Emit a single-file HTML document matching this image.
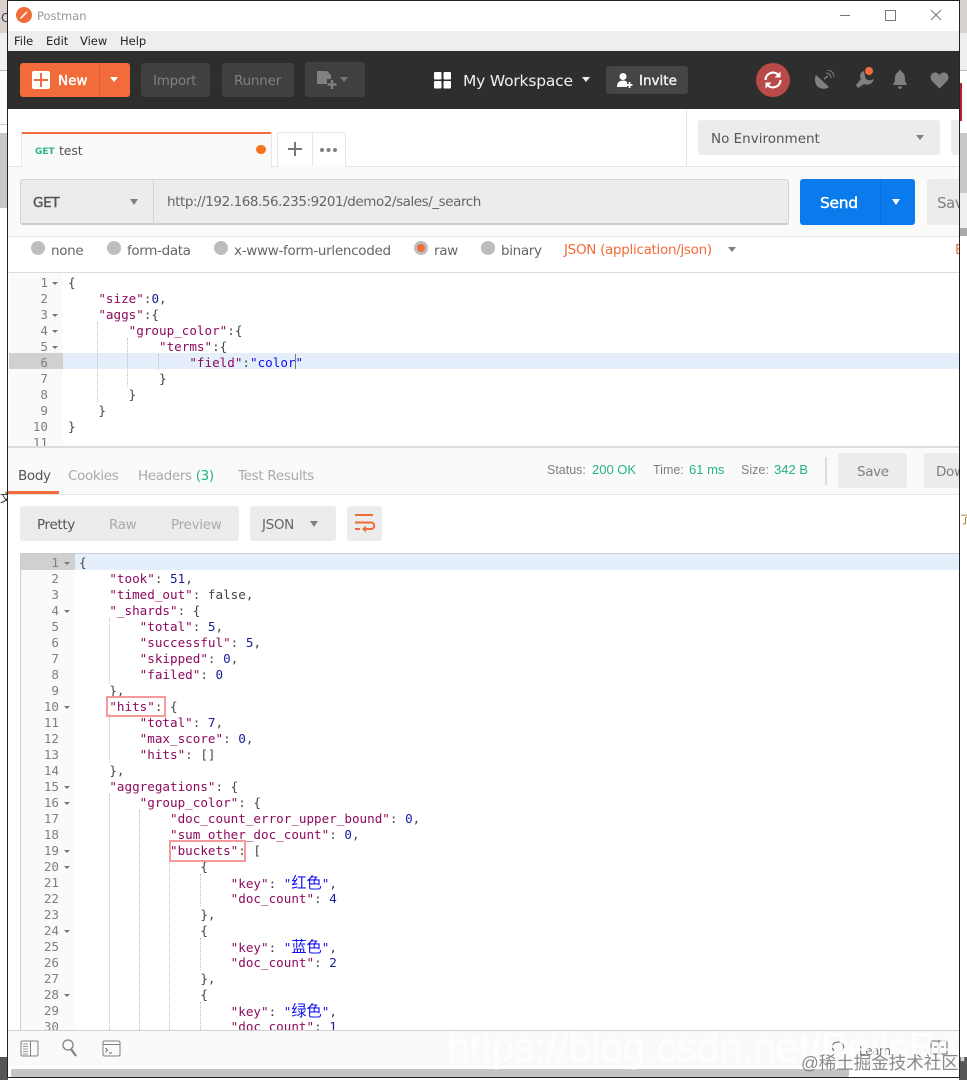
<!DOCTYPE html>
<html><head><meta charset="utf-8"><title>Postman</title>
<style>
html,body{margin:0;padding:0;background:#fff}
body{width:967px;height:1080px;position:relative;overflow:hidden;font-family:"DejaVu Sans","Liberation Sans","Noto Sans CJK SC",sans-serif;font-size:13px;color:#666}
.a{position:absolute}
.t{position:absolute;white-space:pre;line-height:16px;margin-top:1px}
.b{font-weight:normal;-webkit-text-stroke:.4px currentColor}
.c{position:absolute;white-space:pre;font-family:"DejaVu Sans Mono","Noto Sans CJK SC",monospace;font-size:12.6px;line-height:16px;color:#444;height:16px;margin-top:1px}
.n{position:absolute;font-family:"DejaVu Sans Mono",monospace;font-size:12.6px;line-height:16px;text-align:right;color:#808080;height:16px;margin-top:1px}
.k{color:#8c0a5f}.d{color:#1b1b9e}.s{color:#1010f0}
.z{font-size:15.2px;line-height:16px}
.g{position:absolute;width:0;border-left:1px dotted #bbb}
.f{position:absolute;width:0;height:0;border-left:3px solid transparent;border-right:3px solid transparent;border-top:3px solid #777;margin-top:1px}
.car{position:absolute;width:0;height:0;border-left:5px solid transparent;border-right:5px solid transparent;border-top:6px solid #808080}
.rad{position:absolute;width:14px;height:14px;border-radius:50%;background:#bdbdbd}
.box{position:absolute;background:#ececec;border-radius:3px}
</style></head><body>

<!-- desktop strips outside window -->
<div class="a" style="left:0;top:0;width:8px;height:33px;background:#d8d2cf"></div>
<div class="a" style="left:0;top:33px;width:8px;height:37px;background:#f1f1f1"></div>
<div class="a" style="left:0;top:70px;width:8px;height:1px;background:#bbb"></div>
<div class="a" style="left:0;top:79px;width:8px;height:45px;background:#fafafa"></div>
<div class="a" style="left:0;top:124px;width:8px;height:1px;background:#ccc"></div>
<div class="a" style="left:0;top:133px;width:8px;height:75px;background:#c8c8c8"></div>
<div class="a" style="left:0;top:208px;width:8px;height:872px;background:#fff"></div>
<div class="t" style="left:1px;top:9px;color:#444;font-size:12px">C</div>
<div class="a" style="left:959px;top:0;width:8px;height:33px;background:#d8d2cf"></div>
<div class="a" style="left:960px;top:33px;width:7px;height:37px;background:#eee"></div>
<div class="a" style="left:960px;top:70px;width:7px;height:1px;background:#bbb"></div>
<div class="a" style="left:960px;top:83px;width:2px;height:38px;background:#b02030"></div>
<div class="a" style="left:960px;top:133px;width:7px;height:60px;background:#c9c9c9"></div>
<div class="a" style="left:960px;top:193px;width:7px;height:35px;background:#eee"></div>
<div class="a" style="left:960px;top:228px;width:7px;height:8px;background:#aaa"></div>
<div class="a" style="left:0;top:1057px;width:8px;height:23px;background:#555"></div>
<div class="a" style="left:959px;top:1057px;width:8px;height:23px;background:#555"></div>
<div class="t" style="left:0;top:489px;font-size:12px;color:#333">文</div>
<div class="t" style="left:960px;top:511px;font-size:11px;color:#a60">了</div>

<!-- window -->
<div class="a" id="w" style="left:7px;top:0;width:953px;height:1078px;box-sizing:border-box;border:1px solid #222;background:#fff;overflow:hidden">
</div>
<div class="a" style="left:8px;top:1px;width:951px;height:1076px;overflow:hidden;background:#fff">
<div style="position:absolute;left:-8px;top:-1px;width:967px;height:1080px">

<!-- title bar -->
<div class="a" style="left:16px;top:7px;width:16px;height:16px;border-radius:50%;background:#f26b3a"></div>
<svg class="a" style="left:16px;top:7px" width="16" height="16"><path d="M4.5 11.5L11 4.8" stroke="#fff" stroke-width="1.6" fill="none"/></svg>
<div class="t" style="left:37px;top:7px;color:#999;font-size:11.5px">Postman</div>
<div class="a" style="left:840px;top:15px;width:10px;height:1px;background:#777"></div>
<div class="a" style="left:885px;top:10px;width:9px;height:9px;border:1px solid #777"></div>
<svg class="a" style="left:930px;top:9px" width="12" height="12"><path d="M1 1L11 11M11 1L1 11" stroke="#777" stroke-width="1" fill="none"/></svg>

<!-- menu -->
<div class="a" style="left:8px;top:31px;width:951px;height:20px;background:#eee"></div>
<div class="t" style="left:14px;top:32px;color:#222;font-size:11.5px">File</div>
<div class="t" style="left:46px;top:32px;color:#222;font-size:11.5px">Edit</div>
<div class="t" style="left:80px;top:32px;color:#222;font-size:11.5px">View</div>
<div class="t" style="left:120px;top:32px;color:#222;font-size:11.5px">Help</div>

<!-- header -->
<div class="a" style="left:8px;top:51px;width:951px;height:58px;background:#2e2e2e"></div>
<div class="a" style="left:20px;top:63px;width:110px;height:34px;background:#f26b3a;border-radius:3px"></div>
<div class="a" style="left:99px;top:63px;width:1px;height:34px;background:#d85f33"></div>
<div class="a" style="left:32px;top:71px;width:18px;height:18px;background:#fff;border-radius:2px"></div>
<div class="a" style="left:40px;top:73px;width:2px;height:14px;background:#f26b3a"></div>
<div class="a" style="left:34px;top:79px;width:14px;height:2px;background:#f26b3a"></div>
<div class="t b" style="left:58px;top:72px;color:#fff;font-size:13.5px">New</div>
<div class="car" style="left:110px;top:77px;border-top-color:#fff;border-left-width:4.5px;border-right-width:4.5px;border-top-width:5px"></div>
<div class="box" style="left:141px;top:63px;width:69px;height:34px;background:#404040"></div>
<div class="t" style="left:153px;top:72px;color:#808080;font-size:13.5px;letter-spacing:-.25px">Import</div>
<div class="box" style="left:222px;top:63px;width:72px;height:34px;background:#404040"></div>
<div class="t" style="left:234px;top:72px;color:#808080;font-size:13.5px;letter-spacing:-.2px">Runner</div>
<div class="box" style="left:305px;top:62px;width:60px;height:35px;background:#404040"></div>
<svg class="a" style="left:316px;top:69px" width="30" height="21"><path d="M1 2h10l4 4v4h-4v5H1z" fill="#808080"/><path d="M16 11v9M11.500 15.500h9" stroke="#808080" stroke-width="2.400"/></svg>
<div class="car" style="left:340px;top:77px;border-left-width:4px;border-right-width:4px;border-top-width:5px;border-top-color:#777"></div>
<svg class="a" style="left:434px;top:72px" width="18" height="17"><rect x="0" y="0" width="7.500" height="7.500" rx="1" fill="#fff"/><rect x="9.500" y="0" width="7.500" height="7.500" rx="1" fill="#fff"/><rect x="0" y="9" width="7.500" height="7.500" rx="1" fill="#fff"/><rect x="9.500" y="9" width="7.500" height="7.500" rx="1" fill="#fff"/></svg>
<div class="t" style="left:463px;top:72px;color:#f0f0f0;font-size:15.500px;letter-spacing:-.2px">My Workspace</div>
<div class="car" style="left:582px;top:77px;border-top-color:#eee;border-left-width:4.500px;border-right-width:4.500px;border-top-width:5px"></div>
<div class="box" style="left:606px;top:66px;width:82px;height:28px;background:#454545"></div>
<svg class="a" style="left:616px;top:72px" width="18" height="17"><circle cx="7" cy="4.500" r="3.500" fill="#fff"/><path d="M1 15c0-5 3-6.500 6-6.500 2 0 3 .5 4 1.500v5z" fill="#fff"/><path d="M13.500 10v6M10.500 13h6" stroke="#fff" stroke-width="1.800"/></svg>
<div class="t b" style="left:639px;top:72px;color:#f0f0f0;font-size:13.500px">Invite</div>
<div class="a" style="left:756px;top:63px;width:34px;height:34px;border-radius:50%;background:#b94a48"></div>
<svg class="a" style="left:756px;top:63px" width="34" height="34"><path d="M9.500 17a7.500 7.500 0 0 1 13-5M24.500 17a7.500 7.500 0 0 1-13 5" stroke="#fff" stroke-width="2.200" fill="none"/><path d="M24.500 8.500v6h-6zM9.500 25.500v-6h6z" fill="#fff"/></svg>
<svg class="a" style="left:814px;top:70px" width="21" height="20"><path d="M2 5l13 12c-4 3-9 2-12-1-2-3-3-7-1-11z" fill="#808080"/><path d="M10 9l4-3" stroke="#808080" stroke-width="1.500"/><path d="M12 3c3 0 5 2 5 5M13 0c4 0 7 3 7 7" stroke="#808080" stroke-width="1" fill="none"/></svg>
<svg class="a" style="left:856px;top:71px" width="20" height="18"><path d="M8 0C4 1 3 5 5 8L0 14l2 3 6-4c5 2 9-1 10-5l-3 1c-3 1-6-1-6-4z" fill="#808080"/></svg>
<div class="a" style="left:865px;top:67px;width:8px;height:8px;border-radius:50%;background:#f26b3a"></div>
<svg class="a" style="left:892px;top:70px" width="16" height="20"><path d="M8 0c1 0 1.500 1 1.500 2 3 1 3.500 4 3.500 7s1 4 2 6H1c1-2 2-3 2-6s.5-6 3.500-7C6.500 1 7 0 8 0zM6 16.500h4c0 1.500-1 2.500-2 2.500s-2-1-2-2.500z" fill="#808080"/></svg>
<svg class="a" style="left:930px;top:72px" width="19" height="17"><path d="M9.500 16.500L2 9C-1 5.500 1 .5 5 .5c2 0 3.500 1 4.500 2.500C10.500 1.500 12 .5 14 .5c4 0 6 5 3 8.500z" fill="#808080"/></svg>

<!-- tabs row -->
<div class="a" style="left:8px;top:166px;width:951px;height:1px;background:#e5e5e5"></div>
<div class="a" style="left:21px;top:132px;width:251px;height:35px;background:#fafafa;box-sizing:border-box;border:1px solid #e6e6e6;border-bottom:none;border-top:2px solid #f26b3a;border-radius:2px 2px 0 0"></div>
<div class="t" style="left:35px;top:143px;color:#26b47f;font-size:9px;font-weight:bold">GET</div>
<div class="t" style="left:59px;top:142px;color:#555;font-size:12.500px;letter-spacing:-.1px">test</div>
<div class="a" style="left:256px;top:145px;width:10px;height:9px;border-radius:5px;background:#f4741f"></div>
<div class="a" style="left:277px;top:132px;width:69px;height:35px;box-sizing:border-box;border:1px solid #e6e6e6;border-bottom:none;background:#fff;border-radius:2px 2px 0 0"></div>
<div class="a" style="left:312px;top:133px;width:1px;height:33px;background:#e6e6e6"></div>
<div class="a" style="left:288px;top:148px;width:14px;height:2px;background:#777"></div>
<div class="a" style="left:294px;top:142px;width:2px;height:14px;background:#777"></div>
<div class="a" style="left:320px;top:148px;width:4px;height:4px;border-radius:50%;background:#808080;box-shadow:6.500px 0 0 #808080,13px 0 0 #808080"></div>
<div class="a" style="left:686px;top:109px;width:1px;height:57px;background:#e5e5e5"></div>
<div class="box" style="left:698px;top:120px;width:242px;height:35px"></div>
<div class="t" style="left:711px;top:130px;color:#555;font-size:13.500px;letter-spacing:0">No Environment</div>
<div class="car" style="left:916px;top:135px;border-left-width:4.500px;border-right-width:4.500px;border-top-width:5px"></div>
<div class="box" style="left:951px;top:120px;width:30px;height:35px"></div>

<!-- request bar -->
<div class="a" style="left:8px;top:167px;width:951px;height:69px;background:#fafafa"></div>
<div class="a" style="left:8px;top:236px;width:951px;height:1px;background:#e6e6e6"></div>
<div class="a" style="left:20px;top:179px;width:769px;height:46px;box-sizing:border-box;background:#ececec;border:1px solid #d4d4d4;border-bottom:2px solid #ccc;border-radius:3px"></div>
<div class="a" style="left:153px;top:180px;width:1px;height:44px;background:#d4d4d4"></div>
<div class="t b" style="left:33px;top:194px;color:#555;font-size:13.500px;letter-spacing:-.3px">GET</div>
<div class="car" style="left:130px;top:199px;border-left-width:4.500px;border-right-width:4.500px;border-top-width:6px"></div>
<div class="t" style="left:167px;top:193px;color:#666;font-size:13.500px;letter-spacing:-.44px">http://192.168.56.235:9201/demo2/sales/_search</div>
<div class="box" style="left:800px;top:179px;width:115px;height:46px;background:#097bed"></div>
<div class="a" style="left:880px;top:179px;width:1px;height:46px;background:#0a6fd4"></div>
<div class="t b" style="left:820px;top:194px;color:#fff;font-size:15.500px;letter-spacing:-.3px">Send</div>
<div class="car" style="left:892px;top:199px;border-top-color:#fff;border-left-width:4.500px;border-right-width:4.500px;border-top-width:6px"></div>
<div class="box" style="left:927px;top:179px;width:60px;height:46px"></div>
<div class="t" style="left:937px;top:194px;color:#808080;font-size:15px;letter-spacing:-.5px">Save</div>

<!-- body radios -->
<div class="rad" style="left:31px;top:241px"></div><div class="t" style="left:51px;top:242px;font-size:13.500px;letter-spacing:-.35px">none</div>
<div class="rad" style="left:107px;top:241px"></div><div class="t" style="left:127px;top:242px;font-size:13.500px;letter-spacing:-.35px">form-data</div>
<div class="rad" style="left:214px;top:241px"></div><div class="t" style="left:234px;top:242px;font-size:13.500px;letter-spacing:-.3px">x-www-form-urlencoded</div>
<div class="rad" style="left:414px;top:241px"></div><div class="a" style="left:417px;top:244px;width:8px;height:8px;border-radius:50%;background:#f26b3a"></div><div class="t" style="left:434px;top:242px;font-size:13.500px;letter-spacing:-.35px">raw</div>
<div class="rad" style="left:481px;top:241px"></div><div class="t" style="left:501px;top:242px;font-size:13.500px;letter-spacing:-.35px">binary</div>
<div class="t" style="left:564px;top:241px;color:#f26b3a;font-size:13.500px;letter-spacing:-.3px">JSON (application/json)</div>
<div class="car" style="left:728px;top:247px;border-left-width:4.500px;border-right-width:4.500px;border-top-width:5px"></div>
<div class="t" style="left:955px;top:241px;color:#f26b3a;font-size:13.500px">B</div>

<!-- request editor -->
<div class="a" style="left:8px;top:272px;width:951px;height:1px;background:#ddd"></div>
<div class="a" style="left:9px;top:273px;width:54px;height:173px;background:#fafafa"></div>
<div class="a" style="left:9px;top:353px;width:54px;height:16px;background:#d0d0d0"></div>
<div class="a" style="left:63px;top:353px;width:896px;height:16px;background:#e5effb"></div>
<div class="g" style="left:97px;top:322px;height:80px"></div>
<div class="g" style="left:127px;top:338px;height:48px"></div>
<div class="g" style="left:158px;top:354px;height:16px"></div>
<div id="rq">
<div class="n" style="left:9px;top:274px;width:39px">1</div><div class="c" style="left:68px;top:274px">{</div>
<div class="n" style="left:9px;top:290px;width:39px">2</div><div class="c" style="left:68px;top:290px">    <span class="k">"size"</span>:<span class="d">0</span>,</div>
<div class="n" style="left:9px;top:306px;width:39px">3</div><div class="c" style="left:68px;top:306px">    <span class="k">"aggs"</span>:{</div>
<div class="n" style="left:9px;top:322px;width:39px">4</div><div class="c" style="left:68px;top:322px">        <span class="k">"group_color"</span>:{</div>
<div class="n" style="left:9px;top:338px;width:39px">5</div><div class="c" style="left:68px;top:338px">            <span class="k">"terms"</span>:{</div>
<div class="n" style="left:9px;top:354px;width:39px">6</div><div class="c" style="left:68px;top:354px">                <span class="k">"field"</span>:<span class="s">"color"</span></div>
<div class="n" style="left:9px;top:370px;width:39px">7</div><div class="c" style="left:68px;top:370px">            }</div>
<div class="n" style="left:9px;top:386px;width:39px">8</div><div class="c" style="left:68px;top:386px">        }</div>
<div class="n" style="left:9px;top:402px;width:39px">9</div><div class="c" style="left:68px;top:402px">    }</div>
<div class="n" style="left:9px;top:418px;width:39px">10</div><div class="c" style="left:68px;top:418px">}</div>
<div class="n" style="left:9px;top:434px;width:39px;height:11px;overflow:hidden">11</div>
</div>
<div class="f" style="left:52px;top:281px"></div><div class="f" style="left:52px;top:313px"></div><div class="f" style="left:52px;top:329px"></div><div class="f" style="left:52px;top:345px"></div>
<div class="a" style="left:295px;top:354px;width:1px;height:15px;background:#777"></div>

<!-- response tabs -->
<div class="a" style="left:8px;top:446px;width:951px;height:2px;background:#ddd"></div>
<div class="a" style="left:8px;top:448px;width:951px;height:46px;background:#fafafa"></div>
<div class="a" style="left:8px;top:494px;width:951px;height:1px;background:#e6e6e6"></div>
<div class="a" style="left:8px;top:491px;width:51px;height:3px;background:#f26b3a"></div>
<div class="t" style="left:18px;top:467px;color:#555;font-size:13.500px;letter-spacing:-.35px">Body</div>
<div class="t" style="left:68px;top:467px;color:#aaa;font-size:13.500px;letter-spacing:-.35px">Cookies</div>
<div class="t" style="left:138px;top:467px;color:#aaa;font-size:13.500px;letter-spacing:-.35px">Headers <span style="color:#26b47f">(3)</span></div>
<div class="t" style="left:238px;top:467px;color:#aaa;font-size:13.500px;letter-spacing:-.3px">Test Results</div>
<div class="t" style="left:547px;top:461px;color:#808080;font-family:'Liberation Sans',sans-serif;font-size:12.500px">Status:</div>
<div class="t" style="left:592px;top:461px;color:#26b47f;font-family:'Liberation Sans',sans-serif;font-size:13px">200 OK</div>
<div class="t" style="left:653px;top:461px;color:#808080;font-family:'Liberation Sans',sans-serif;font-size:12.500px">Time:</div>
<div class="t" style="left:689px;top:461px;color:#26b47f;font-family:'Liberation Sans',sans-serif;font-size:13px">61 ms</div>
<div class="t" style="left:741px;top:461px;color:#808080;font-family:'Liberation Sans',sans-serif;font-size:12.500px">Size:</div>
<div class="t" style="left:774px;top:461px;color:#26b47f;font-family:'Liberation Sans',sans-serif;font-size:13px">342 B</div>
<div class="a" style="left:825px;top:457px;width:2px;height:28px;background:#ddd"></div>
<div class="box" style="left:838px;top:453px;width:69px;height:35px"></div>
<div class="t" style="left:857px;top:463px;color:#808080;font-size:13.500px;letter-spacing:-.35px">Save</div>
<div class="box" style="left:924px;top:453px;width:60px;height:35px"></div>
<div class="t" style="left:936px;top:463px;color:#808080;font-size:13.500px;letter-spacing:-.35px">Download</div>

<!-- response controls -->
<div class="box" style="left:20px;top:506px;width:219px;height:35px"></div>
<div class="t" style="left:37px;top:516px;color:#555;font-size:13.500px;letter-spacing:-.35px">Pretty</div>
<div class="t" style="left:109px;top:516px;color:#aaa;font-size:13.500px;letter-spacing:-.35px">Raw</div>
<div class="t" style="left:171px;top:516px;color:#aaa;font-size:13.500px;letter-spacing:-.3px">Preview</div>
<div class="box" style="left:250px;top:506px;width:86px;height:35px"></div>
<div class="t" style="left:262px;top:516px;color:#666;font-size:13.500px;letter-spacing:-.35px">JSON</div>
<div class="car" style="left:310px;top:521px;border-left-width:4.500px;border-right-width:4.500px;border-top-width:6px"></div>
<div class="box" style="left:347px;top:506px;width:35px;height:35px"></div>
<svg class="a" style="left:354px;top:513px" width="22" height="21"><path d="M1 2h18M1 9.500h16a3 3 0 0 1 0 6.500H10M1 16h5" stroke="#f26b3a" stroke-width="2" fill="none"/><path d="M12 12.500v7l-4-3.500z" fill="#f26b3a"/></svg>

<!-- response editor -->
<div class="a" style="left:20px;top:553px;width:939px;height:1px;background:#ccd"></div>
<div class="a" style="left:20px;top:553px;width:1px;height:477px;background:#ccc"></div>
<div class="a" style="left:21px;top:554px;width:54px;height:476px;background:#fafafa"></div>
<div class="a" style="left:21px;top:554px;width:54px;height:16px;background:#d0d0d0"></div>
<div class="a" style="left:75px;top:554px;width:884px;height:16px;background:#e5effb"></div>
<div class="g" style="left:109px;top:618px;height:65px"></div>
<div class="g" style="left:109px;top:714px;height:48px"></div>
<div class="g" style="left:109px;top:794px;height:236px"></div>
<div class="g" style="left:139px;top:810px;height:220px"></div>
<div class="g" style="left:169px;top:858px;height:172px"></div>
<div class="g" style="left:200px;top:874px;height:32px"></div>
<div class="g" style="left:200px;top:938px;height:32px"></div>
<div class="g" style="left:200px;top:1002px;height:28px"></div>
<div style="position:absolute;left:0;top:0;width:967px;height:1030px;overflow:hidden">
<div class="n" style="left:21px;top:554px;width:38px">1</div><div class="c" style="left:79px;top:554px">{</div>
<div class="n" style="left:21px;top:570px;width:38px">2</div><div class="c" style="left:79px;top:570px">    <span class="k">"took"</span>: <span class="d">51</span>,</div>
<div class="n" style="left:21px;top:586px;width:38px">3</div><div class="c" style="left:79px;top:586px">    <span class="k">"timed_out"</span>: false,</div>
<div class="n" style="left:21px;top:602px;width:38px">4</div><div class="c" style="left:79px;top:602px">    <span class="k">"_shards"</span>: {</div>
<div class="n" style="left:21px;top:618px;width:38px">5</div><div class="c" style="left:79px;top:618px">        <span class="k">"total"</span>: <span class="d">5</span>,</div>
<div class="n" style="left:21px;top:634px;width:38px">6</div><div class="c" style="left:79px;top:634px">        <span class="k">"successful"</span>: <span class="d">5</span>,</div>
<div class="n" style="left:21px;top:650px;width:38px">7</div><div class="c" style="left:79px;top:650px">        <span class="k">"skipped"</span>: <span class="d">0</span>,</div>
<div class="n" style="left:21px;top:666px;width:38px">8</div><div class="c" style="left:79px;top:666px">        <span class="k">"failed"</span>: <span class="d">0</span></div>
<div class="n" style="left:21px;top:682px;width:38px">9</div><div class="c" style="left:79px;top:682px">    },</div>
<div class="n" style="left:21px;top:698px;width:38px">10</div><div class="c" style="left:79px;top:698px">    <span class="k">"hits"</span>: {</div>
<div class="n" style="left:21px;top:714px;width:38px">11</div><div class="c" style="left:79px;top:714px">        <span class="k">"total"</span>: <span class="d">7</span>,</div>
<div class="n" style="left:21px;top:730px;width:38px">12</div><div class="c" style="left:79px;top:730px">        <span class="k">"max_score"</span>: <span class="d">0</span>,</div>
<div class="n" style="left:21px;top:746px;width:38px">13</div><div class="c" style="left:79px;top:746px">        <span class="k">"hits"</span>: []</div>
<div class="n" style="left:21px;top:762px;width:38px">14</div><div class="c" style="left:79px;top:762px">    },</div>
<div class="n" style="left:21px;top:778px;width:38px">15</div><div class="c" style="left:79px;top:778px">    <span class="k">"aggregations"</span>: {</div>
<div class="n" style="left:21px;top:794px;width:38px">16</div><div class="c" style="left:79px;top:794px">        <span class="k">"group_color"</span>: {</div>
<div class="n" style="left:21px;top:810px;width:38px">17</div><div class="c" style="left:79px;top:810px">            <span class="k">"doc_count_error_upper_bound"</span>: <span class="d">0</span>,</div>
<div class="n" style="left:21px;top:826px;width:38px">18</div><div class="c" style="left:79px;top:826px">            <span class="k">"sum_other_doc_count"</span>: <span class="d">0</span>,</div>
<div class="n" style="left:21px;top:842px;width:38px">19</div><div class="c" style="left:79px;top:842px">            <span class="k">"buckets"</span>: [</div>
<div class="n" style="left:21px;top:858px;width:38px">20</div><div class="c" style="left:79px;top:858px">                {</div>
<div class="n" style="left:21px;top:874px;width:38px">21</div><div class="c" style="left:79px;top:874px">                    <span class="k">"key"</span>: <span class="s">"<span class="z">红色</span>"</span>,</div>
<div class="n" style="left:21px;top:890px;width:38px">22</div><div class="c" style="left:79px;top:890px">                    <span class="k">"doc_count"</span>: <span class="d">4</span></div>
<div class="n" style="left:21px;top:906px;width:38px">23</div><div class="c" style="left:79px;top:906px">                },</div>
<div class="n" style="left:21px;top:922px;width:38px">24</div><div class="c" style="left:79px;top:922px">                {</div>
<div class="n" style="left:21px;top:938px;width:38px">25</div><div class="c" style="left:79px;top:938px">                    <span class="k">"key"</span>: <span class="s">"<span class="z">蓝色</span>"</span>,</div>
<div class="n" style="left:21px;top:954px;width:38px">26</div><div class="c" style="left:79px;top:954px">                    <span class="k">"doc_count"</span>: <span class="d">2</span></div>
<div class="n" style="left:21px;top:970px;width:38px">27</div><div class="c" style="left:79px;top:970px">                },</div>
<div class="n" style="left:21px;top:986px;width:38px">28</div><div class="c" style="left:79px;top:986px">                {</div>
<div class="n" style="left:21px;top:1002px;width:38px">29</div><div class="c" style="left:79px;top:1002px">                    <span class="k">"key"</span>: <span class="s">"<span class="z">绿色</span>"</span>,</div>
<div class="n" style="left:21px;top:1018px;width:38px">30</div><div class="c" style="left:79px;top:1018px">                    <span class="k">"doc_count"</span>: <span class="d">1</span></div>
</div>
<div class="f" style="left:64px;top:561px"></div><div class="f" style="left:64px;top:609px"></div><div class="f" style="left:64px;top:705px"></div><div class="f" style="left:64px;top:785px"></div><div class="f" style="left:64px;top:801px"></div><div class="f" style="left:64px;top:849px"></div><div class="f" style="left:64px;top:865px"></div><div class="f" style="left:64px;top:929px"></div><div class="f" style="left:64px;top:993px"></div>
<div class="a" style="left:106px;top:696px;width:56px;height:17px;border:2px solid #f59a9a"></div>
<div class="a" style="left:169px;top:840px;width:73px;height:18px;border:2px solid #f59a9a"></div>

<!-- footer -->
<div class="a" style="left:8px;top:1030px;width:951px;height:1px;background:#d0d0d0"></div>
<div class="a" style="left:8px;top:1031px;width:951px;height:35px;background:#fafafa"></div>
<svg class="a" style="left:20px;top:1040px" width="19" height="17"><rect x="1" y="1" width="17" height="15" rx="1.500" fill="none" stroke="#808080"/><path d="M10.500 1v15" stroke="#808080"/><path d="M3 4h5M3 6.500h5M3 9h5M3 11.500h5M3 14h5" stroke="#999"/></svg>
<svg class="a" style="left:61px;top:1039px" width="18" height="19"><circle cx="7" cy="6" r="5" fill="none" stroke="#808080" stroke-width="1.300"/><path d="M10 10l5 7" stroke="#808080" stroke-width="2.200"/></svg>
<svg class="a" style="left:102px;top:1040px" width="19" height="17"><rect x="1" y="1" width="17" height="15" rx="1.500" fill="none" stroke="#808080"/><path d="M1 4.500h17" stroke="#808080"/><path d="M3.500 8l2 2-2 2M7 13h3" stroke="#666" fill="none"/></svg>
<svg class="a" style="left:830px;top:1040px" width="16" height="18"><path d="M4 11C1 8 2 2 8 2s7 6 4 9" stroke="#666" fill="none"/></svg>
<div class="t" style="left:859px;top:1042px;color:#777;font-size:12px;letter-spacing:-.4px">Learn</div>
<svg class="a" style="left:930px;top:1040px" width="18" height="17"><rect x="1" y="1" width="16" height="13" fill="none" stroke="#666"/><path d="M9 1v13M4 7h3M11 7h3" stroke="#666"/></svg>
<div class="a" style="left:8px;top:1066px;width:951px;height:3px;background:#fff"></div>
<div class="a" style="left:11px;top:1069px;width:838px;height:8px;background:#c4c4c4;border-radius:2px"></div>

</div></div>

<!-- watermarks -->
<div class="t" style="left:447px;top:1023px;line-height:46px;color:rgba(255,255,255,.75);font-family:'Liberation Sans',sans-serif;font-size:40.500px">https://blog.csdn.net/BeiisBei</div>
<div class="t" style="left:801px;top:1052px;line-height:20px;color:#777;font-family:'Liberation Sans','Noto Sans CJK SC',sans-serif;font-size:17.500px;opacity:.85">@稀土掘金技术社区</div>
</body></html>
